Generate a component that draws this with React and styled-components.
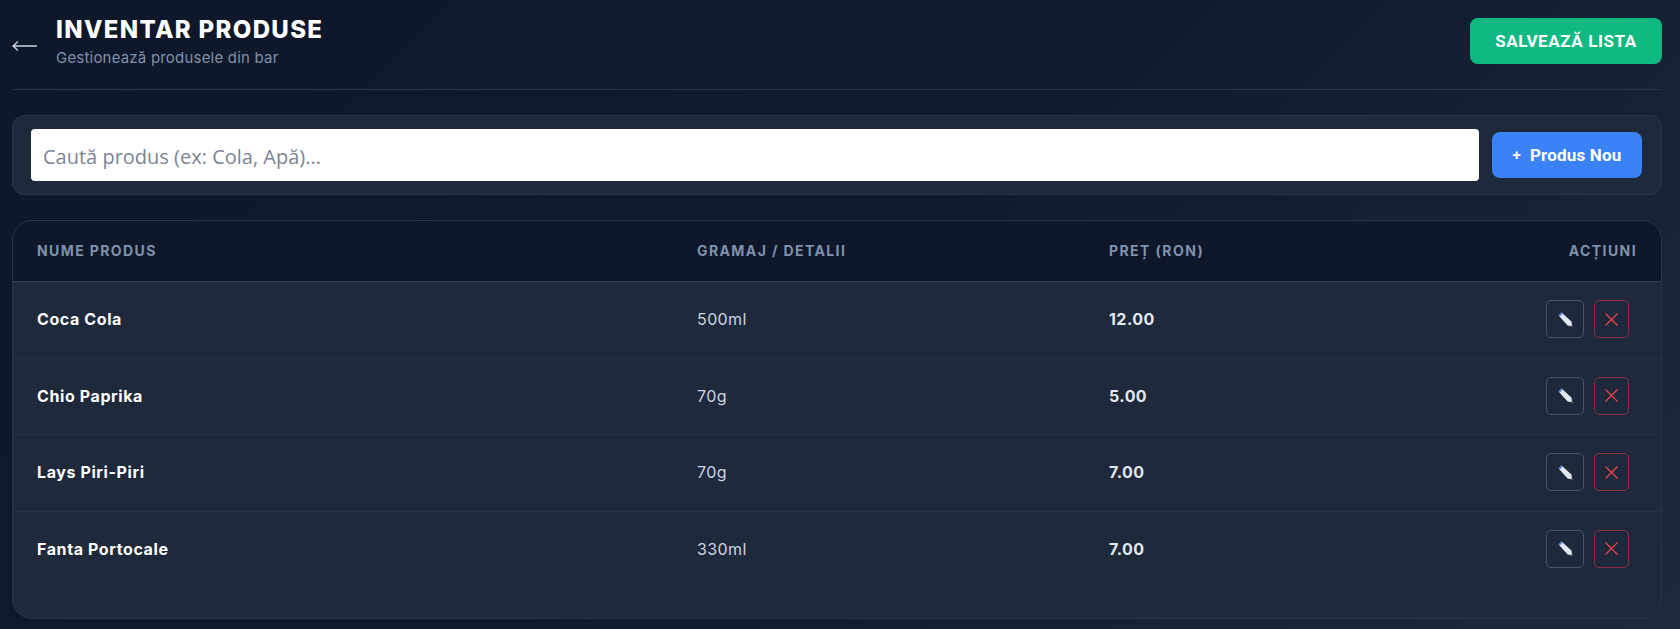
import React from 'react';
import styled, { createGlobalStyle } from 'styled-components';

const Global = createGlobalStyle`
  html, body { margin: 0; padding: 0; height: 100%; }
  body { background: #0f172a; font-family: Inter, "Liberation Sans", sans-serif; overflow: hidden; }
  * { box-sizing: border-box; }
`;
const Page = styled.div`
  width: 1680px; height: 629px; padding: 0 18px 0 12px;
  background: linear-gradient(135deg, #0f172a 0%, #101a2e 50%, #1e293b 100%);
`;
const Header = styled.header`
  height: 90px; display: flex; align-items: flex-start; justify-content: space-between;
  border-bottom: 1px solid #2a3548;
`;
const TitleGroup = styled.div`display: flex; align-items: flex-start;`;
const Back = styled.div`width: 44px; height: 89px; padding-top: 37px;`;
const TitleText = styled.div`padding-top: 15px;`;
const Title = styled.h1`
  margin: 0; font-size: 24px; line-height: 29px; font-weight: 800; letter-spacing: 1.35px; color: #fff;
`;
const Subtitle = styled.div`
  margin-top: 5px; font-size: 15px; line-height: 18px; letter-spacing: .2px; color: #7f92ad;
`;
const SaveButton = styled.button`
  margin-top: 18px; width: 192px; height: 46px; border: 0; border-radius: 8px; background: #10b981;
  color: #fff; font: 700 17px Roboto, sans-serif; letter-spacing: .6px;
`;
const SearchPanel = styled.section`
  margin-top: 25px; height: 80px; display: flex; align-items: center; gap: 13px;
  padding: 0 19px 0 18px; background: #1e293b; border: 1px solid #2a3548; border-radius: 12px;
`;
const SearchInput = styled.input`
  flex: 1; height: 52px; border: 0; border-radius: 4px; background: #fff; padding: 2px 12px 0;
  font: 20px "Open Sans", sans-serif; color: #111;
  &::placeholder { color: #7b8494; opacity: 1; }
`;
const AddButton = styled.button`
  width: 150px; height: 46px; border: 0; border-radius: 8px; background: #3b82f6; color: #fff;
  font: 700 17px Roboto, sans-serif; letter-spacing: .2px;
  display: flex; align-items: center; justify-content: center; gap: 9px;
`;
const Plus = styled.span`font-size: 15px; font-weight: 600;`;
const TableCard = styled.section`
  margin-top: 25px; height: 399px; background: #1e293b; border: 1px solid #2a3548; border-radius: 20px; overflow: hidden;
`;
const Row = styled.div`
  display: grid; grid-template-columns: 660px 412px 1fr; align-items: center; padding: 0 24px;
  height: ${p => (p.$head ? '61px' : '76.5px')};
  padding-bottom: ${p => (p.$head ? '2px' : '1px')};
  background: ${p => (p.$head ? '#0f172a' : 'transparent')};
  border-bottom: 1px solid ${p => (p.$head ? '#334155' : p.$last ? 'transparent' : '#273244')};
`;
const HeadCell = styled.div`
  font-size: 14px; font-weight: 700; letter-spacing: 1.4px; color: #7f92ad;
`;
const Name = styled.div`font-size: 16px; font-weight: 700; letter-spacing: .6px; color: #fff;`;
const Detail = styled.div`font-size: 16px; letter-spacing: .4px; color: #cbd5e1;`;
const Price = styled.div`font-size: 16px; font-weight: 700; letter-spacing: .45px; color: #e2e8f0;`;
const PriceCell = styled.div`display: flex; align-items: center; justify-content: space-between;`;
const Actions = styled.div`display: flex; justify-content: flex-end; gap: 10px; padding-right: 8px;`;
const IconButton = styled.button`
  width: ${p => (p.$danger ? '35px' : '38px')}; height: 38px; padding: 0; background: transparent; border-radius: 5px;
  border: 1px solid ${p => (p.$danger ? '#8f2d3c' : '#475569')};
  display: flex; align-items: center; justify-content: center;
`;

const Arrow = () => (
  <svg width="26" height="14" viewBox="0 0 26 14" fill="none" stroke="#cbd5e1" strokeWidth="1.4">
    <path d="M1 7H25M6 2.5 1 7l5 4.5" />
  </svg>
);
const Pencil = () => (
  <svg width="15" height="15" viewBox="0 0 15 15">
    <path d="M3.6.6 13.4 9.6 14.4 14.4 9.6 13.4.6 3.6Z" fill="#e2e8f0" />
    <path d="M3.6.6.6 3.6 1.6 4.7 4.7 1.6Z" fill="#4f7fe8" />
    <path d="M12.8 14 14.4 14.4 14 12.8Z" fill="#6b5f3a" />
  </svg>
);
const Cross = () => (
  <svg width="13" height="13" viewBox="0 0 13 13" fill="none" stroke="#ef4444" strokeWidth="1.2">
    <path d="M.5.5 12.5 12.5M12.5.5.5 12.5" />
  </svg>
);

const products = [
  ['Coca Cola', '500ml', '12.00'],
  ['Chio Paprika', '70g', '5.00'],
  ['Lays Piri-Piri', '70g', '7.00'],
  ['Fanta Portocale', '330ml', '7.00'],
];

export default function App() {
  return (
    <Page>
      <Global />
      <Header>
        <TitleGroup>
          <Back><Arrow /></Back>
          <TitleText>
            <Title>INVENTAR PRODUSE</Title>
            <Subtitle>Gestionează produsele din bar</Subtitle>
          </TitleText>
        </TitleGroup>
        <SaveButton>SALVEAZĂ LISTA</SaveButton>
      </Header>
      <SearchPanel>
        <SearchInput placeholder="Caută produs (ex: Cola, Apă)..." />
        <AddButton><Plus>+</Plus><span>Produs Nou</span></AddButton>
      </SearchPanel>
      <TableCard>
        <Row $head>
          <HeadCell>NUME PRODUS</HeadCell>
          <HeadCell>GRAMAJ / DETALII</HeadCell>
          <PriceCell>
            <HeadCell>PREȚ (RON)</HeadCell>
            <HeadCell>ACȚIUNI</HeadCell>
          </PriceCell>
        </Row>
        {products.map(([n, d, p], i) => (
          <Row key={n} $last={i === products.length - 1}>
            <Name>{n}</Name>
            <Detail>{d}</Detail>
            <PriceCell>
              <Price>{p}</Price>
              <Actions>
                <IconButton><Pencil /></IconButton>
                <IconButton $danger><Cross /></IconButton>
              </Actions>
            </PriceCell>
          </Row>
        ))}
      </TableCard>
    </Page>
  );
}
